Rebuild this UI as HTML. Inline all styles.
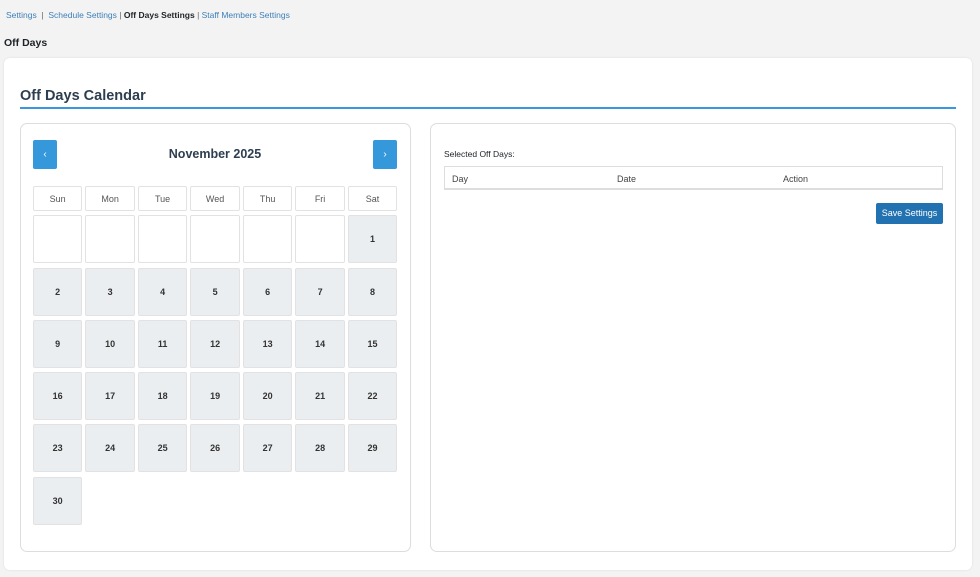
<!DOCTYPE html>
<html><head><meta charset="utf-8"><style>
*{box-sizing:border-box;margin:0;padding:0}
body{width:980px;height:577px;background:#f3f3f3;font-family:"Liberation Sans",sans-serif;position:relative;overflow:hidden;color:#1d2327}
.nav{position:absolute;left:6px;top:10px;font-size:8.5px;color:#666;word-spacing:0px}
.nav a{color:#3d7fb8;text-decoration:none}
.nav b{color:#1d2327}
h1{position:absolute;left:4px;top:37px;font-size:10.5px;font-weight:bold}
.card{position:absolute;left:4px;top:58px;width:968px;height:512px;background:#fff;border-radius:6px;box-shadow:0 0 2px rgba(0,0,0,.1)}
h2{position:absolute;left:20px;top:88px;font-size:14.5px;color:#2c3e50;font-weight:bold}
.line{position:absolute;left:20px;top:107px;width:936px;height:1.5px;background:#3a97dd}
.panel{position:absolute;top:123px;height:429px;border:1px solid #ddd;border-radius:7px;background:#fff}
.btn{position:absolute;top:140px;width:24px;height:29px;background:#3498db;border-radius:2px;color:#fff;font-size:10px;text-align:center;line-height:29px}
.month{position:absolute;left:33px;width:364px;top:147px;text-align:center;font-size:12.5px;font-weight:bold;color:#2c3e50}
.grid{position:absolute;left:33px;top:186px;display:grid;grid-template-columns:repeat(7,49.3px);grid-template-rows:25px repeat(6,48px);column-gap:3.2px;row-gap:4.3px}
.grid div{border:1px solid #e2e2e2;border-radius:2px;display:flex;align-items:center;justify-content:center;font-size:9px}
.grid .h{color:#555;font-size:9px}
.grid .d{background:#ebeef0;font-weight:bold;color:#333}
.lbl{position:absolute;left:444px;top:149px;font-size:8.5px}
.tbl{position:absolute;left:444px;top:166px;width:499px;height:24px;border:1px solid #ddd;border-bottom:2px solid #ddd;font-size:9px;color:#444}
.tbl span{position:absolute;top:7px}
.save{position:absolute;left:876px;top:203px;width:67px;height:21px;background:#2271b1;color:#fff;font-size:9px;text-align:center;line-height:21px;border-radius:2px}
</style></head><body>
<div class="nav"><a>Settings</a> &nbsp;|&nbsp; <a>Schedule Settings</a> | <b>Off Days Settings</b> | <a>Staff Members Settings</a></div>
<h1>Off Days</h1>
<div class="card"></div>
<h2>Off Days Calendar</h2>
<div class="line"></div>
<div class="panel" style="left:20px;width:391px"></div>
<div class="panel" style="left:430px;width:526px"></div>
<div class="btn" style="left:33px">‹</div>
<div class="btn" style="left:373px">›</div>
<div class="month">November 2025</div>
<div class="grid">
<div class="h">Sun</div><div class="h">Mon</div><div class="h">Tue</div><div class="h">Wed</div><div class="h">Thu</div><div class="h">Fri</div><div class="h">Sat</div>
<div></div><div></div><div></div><div></div><div></div><div></div><div class="d">1</div>
<div class="d">2</div><div class="d">3</div><div class="d">4</div><div class="d">5</div><div class="d">6</div><div class="d">7</div><div class="d">8</div>
<div class="d">9</div><div class="d">10</div><div class="d">11</div><div class="d">12</div><div class="d">13</div><div class="d">14</div><div class="d">15</div>
<div class="d">16</div><div class="d">17</div><div class="d">18</div><div class="d">19</div><div class="d">20</div><div class="d">21</div><div class="d">22</div>
<div class="d">23</div><div class="d">24</div><div class="d">25</div><div class="d">26</div><div class="d">27</div><div class="d">28</div><div class="d">29</div>
<div class="d">30</div>
</div>
<div class="lbl">Selected Off Days:</div>
<div class="tbl"><span style="left:7px">Day</span><span style="left:172px">Date</span><span style="left:338px">Action</span></div>
<div class="save">Save Settings</div>
</body></html>
